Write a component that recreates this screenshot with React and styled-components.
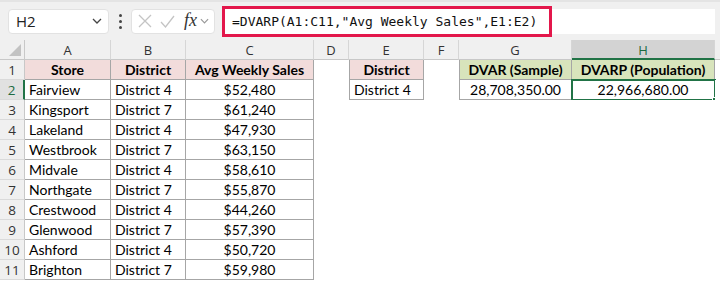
import React from "react";
import styled, { createGlobalStyle } from "styled-components";

const Global = createGlobalStyle`
  html, body { margin: 0; padding: 0; background: #fff; }
  body { width: 720px; height: 282px; overflow: hidden; font-family: "Lato", "Liberation Sans", sans-serif; }
  * { box-sizing: border-box; }
`;

const Page = styled.div`
  width: 720px;
  height: 282px;
  display: flex;
  flex-direction: column;
  background: #fff;
`;

const Toolbar = styled.div`
  height: 40px;
  flex: none;
  display: flex;
  align-items: center;
  padding: 0 5px 0 8px;
  background: #f0f0f0;
  border-top: 2px solid #e4e4e4;
`;

const NameBox = styled.div`
  width: 101px;
  height: 25px;
  background: #fff;
  border: 1px solid #e2e2e2;
  border-radius: 4px;
  display: flex;
  align-items: center;
  justify-content: space-between;
  padding: 0 6px 0 7px;
  font-family: "Open Sans", "Noto Sans", sans-serif;
  font-size: 15px;
  color: #222;
`;

const Dots = styled.div`
  width: 22px;
  display: flex;
  flex-direction: column;
  align-items: center;
  gap: 3px;
  span {
    width: 3px;
    height: 3px;
    border-radius: 50%;
    background: #444;
  }
`;

const FuncBox = styled.div`
  width: 84px;
  height: 25px;
  background: #fff;
  border: 1px solid #e2e2e2;
  border-radius: 4px;
  display: flex;
  align-items: center;
  padding: 0 4px 0 4px;
`;

const Fx = styled.span`
  font-family: "Liberation Serif", "DejaVu Serif", serif;
  font-style: italic;
  font-size: 18px;
  color: #333;
  margin-left: 9px;
  margin-top: -2px;
`;

const FormulaField = styled.div`
  flex: 1;
  height: 25px;
  margin-left: 7px;
  background: #fff;
  display: flex;
  align-items: center;
`;

const Highlight = styled.div`
  height: 31px;
  border: 3px solid #e3174b;
  display: flex;
  align-items: center;
  padding: 0 0 0 7px;
  width: 330px;
  font-family: "DejaVu Sans Mono", "Liberation Mono", monospace;
  font-size: 13px;
  color: #111;
  white-space: pre;
`;

const Sheet = styled.div`
  display: grid;
  grid-template-columns: 25px 86px 75px 128px 35px 75px 35px 113px 143px 1fr;
  grid-auto-rows: 20px;
  flex: 1;
`;

const ColHead = styled.div`
  background: ${(p) => (p.$sel ? "#d3d3d3" : "#f0f0f0")};
  color: ${(p) => (p.$sel ? "#1e6b41" : "#333")};
  border-right: 1px solid #d6d6d6;
  border-bottom: ${(p) => (p.$sel ? "2px solid #217346" : "1px solid #c8c8c8")};
  display: flex;
  align-items: center;
  justify-content: center;
  font-family: "Open Sans", "Noto Sans", sans-serif;
  font-size: 13px;
  padding-top: ${(p) => (p.$sel ? "1px" : "0")};
`;

const Corner = styled.div`
  background: #f0f0f0;
  border-right: 1px solid #c8c8c8;
  border-bottom: 1px solid #c8c8c8;
  display: flex;
  align-items: flex-end;
  justify-content: flex-end;
  padding: 0 3px 3px 0;
`;

const RowHead = styled.div`
  background: ${(p) => (p.$sel ? "#e1e1e1" : "#f0f0f0")};
  color: ${(p) => (p.$sel ? "#1e6b41" : "#333")};
  border-right: ${(p) => (p.$sel ? "2px solid #217346" : "1px solid #c8c8c8")};
  border-bottom: 1px solid #dadada;
  display: flex;
  align-items: center;
  justify-content: center;
  font-family: "Open Sans", "Noto Sans", sans-serif;
  font-size: 13.5px;
`;

const Cell = styled.div`
  position: relative;
  background: ${(p) => p.$fill || "#fff"};
  font-weight: ${(p) => (p.$bold ? 700 : 400)};
  font-size: 14px;
  color: #000;
  display: flex;
  align-items: center;
  justify-content: ${(p) => (p.$align === "center" ? "center" : "flex-start")};
  padding: 0 4px;
  white-space: nowrap;
  border-right: ${(p) => (p.$bd ? "1px solid #a6a6a6" : "none")};
  border-bottom: ${(p) => (p.$bd ? "1px solid #a6a6a6" : "none")};
  border-left: ${(p) => (p.$bl ? "1px solid #a6a6a6" : "none")};
`;

const Selected = styled.div`
  position: absolute;
  inset: -1px -2px -2px -1px;
  border: 2px solid #217346;
  pointer-events: none;
`;

const Handle = styled.div`
  position: absolute;
  right: -4px;
  bottom: -4px;
  width: 6px;
  height: 6px;
  background: #217346;
  border: 1px solid #fff;
`;

const Chevron = ({ color = "#444", w = 10 }) => (
  <svg width={w} height="6" viewBox="0 0 10 6">
    <path d="M1 1 L5 5 L9 1" fill="none" stroke={color} strokeWidth="1.3" />
  </svg>
);

const XIcon = () => (
  <svg width="14" height="14" viewBox="0 0 14 14" style={{ marginLeft: 2 }}>
    <path d="M1 1 L13 13 M13 1 L1 13" stroke="#c4c4c4" strokeWidth="1.3" />
  </svg>
);

const CheckIcon = () => (
  <svg width="15" height="13" viewBox="0 0 15 13" style={{ marginLeft: 8 }}>
    <path d="M1 7 L5.5 12 L14 1" fill="none" stroke="#c4c4c4" strokeWidth="1.3" />
  </svg>
);

const CornerTri = () => (
  <svg width="12" height="12" viewBox="0 0 12 12">
    <path d="M12 0 L12 12 L0 12 Z" fill="#c2c2c2" />
  </svg>
);

const data = [
  ["Fairview", "District 4", "$52,480"],
  ["Kingsport", "District 7", "$61,240"],
  ["Lakeland", "District 4", "$47,930"],
  ["Westbrook", "District 7", "$63,150"],
  ["Midvale", "District 4", "$58,610"],
  ["Northgate", "District 7", "$55,870"],
  ["Crestwood", "District 4", "$44,260"],
  ["Glenwood", "District 7", "$57,390"],
  ["Ashford", "District 4", "$50,720"],
  ["Brighton", "District 7", "$59,980"],
];

const cols = ["A", "B", "C", "D", "E", "F", "G", "H", ""];
const PINK = "#f2dcdb";
const GREEN = "#d8e4bc";

export default function App() {
  const rows = [];
  rows.push(
    <React.Fragment key="r1">
      <RowHead>1</RowHead>
      <Cell $fill={PINK} $bold $align="center" $bd>Store</Cell>
      <Cell $fill={PINK} $bold $align="center" $bd>District</Cell>
      <Cell $fill={PINK} $bold $align="center" $bd>Avg Weekly Sales</Cell>
      <Cell />
      <Cell $fill={PINK} $bold $align="center" $bd $bl>District</Cell>
      <Cell />
      <Cell $fill={GREEN} $bold $align="center" $bd $bl>DVAR (Sample)</Cell>
      <Cell $fill={GREEN} $bold $align="center" $bd>DVARP (Population)</Cell>
      <Cell />
    </React.Fragment>
  );
  data.forEach((d, i) => {
    const n = i + 2;
    rows.push(
      <React.Fragment key={n}>
        <RowHead $sel={n === 2}>{n}</RowHead>
        <Cell $bd>{d[0]}</Cell>
        <Cell $bd>{d[1]}</Cell>
        <Cell $bd $align="center">{d[2]}</Cell>
        <Cell />
        {n === 2 ? <Cell $bd $bl>District 4</Cell> : <Cell />}
        <Cell />
        {n === 2 ? (
          <Cell $bd $bl $align="center">28,708,350.00</Cell>
        ) : (
          <Cell />
        )}
        {n === 2 ? (
          <Cell $bd $align="center">
            22,966,680.00
            <Selected>
              <Handle />
            </Selected>
          </Cell>
        ) : (
          <Cell />
        )}
        <Cell />
      </React.Fragment>
    );
  });

  return (
    <Page>
      <Global />
      <Toolbar>
        <NameBox>
          <span>H2</span>
          <Chevron />
        </NameBox>
        <Dots>
          <span />
          <span />
          <span />
        </Dots>
        <FuncBox>
          <XIcon />
          <CheckIcon />
          <Fx>fx</Fx>
          <span style={{ marginLeft: 3, display: "flex" }}>
            <Chevron color="#999" w={9} />
          </span>
        </FuncBox>
        <FormulaField>
          <Highlight>{'=DVARP(A1:C11,"Avg Weekly Sales",E1:E2)'}</Highlight>
        </FormulaField>
      </Toolbar>
      <Sheet>
        <Corner>
          <CornerTri />
        </Corner>
        {cols.map((c, i) => (
          <ColHead key={i} $sel={c === "H"}>
            {c}
          </ColHead>
        ))}
        {rows}
      </Sheet>
    </Page>
  );
}
